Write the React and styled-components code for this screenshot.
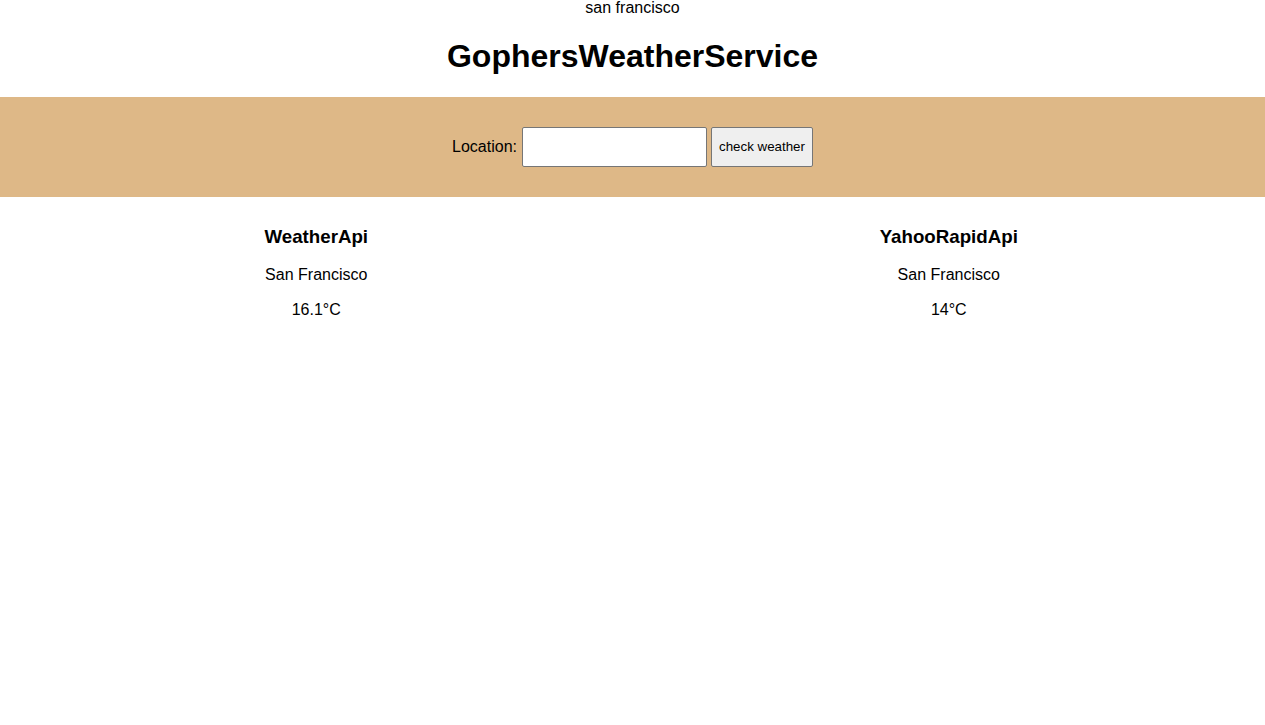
import React, { useState } from 'react';
import styled, { createGlobalStyle } from 'styled-components';

const GlobalStyle = createGlobalStyle`
    body {
        margin: 0;
        font-family: "Liberation Sans", Arial, sans-serif;
        color: #000;
        background: #fff;
    }
`;

const Page = styled.div`
    text-align: center;
`;

const Query = styled.div`
    font-size: 16px;
    line-height: 16px;
`;

const Title = styled.h1`
    margin: 22px 0 22px;
    font-size: 32px;
    line-height: 37px;
`;

const Band = styled.form`
    height: 100px;
    background: #deb887;
    display: flex;
    align-items: center;
    justify-content: center;
    gap: 4px;
`;

const Label = styled.label`
    font-size: 16px;
    margin-right: 1px;
`;

const Input = styled.input`
    box-sizing: border-box;
    width: 185px;
    height: 40px;
    border: 1px solid #767676;
    border-radius: 2px;
    font-family: inherit;
    font-size: 16px;
    padding: 0 4px;
`;

const Button = styled.button`
    box-sizing: border-box;
    width: 102px;
    height: 40px;
    border: 1px solid #767676;
    border-radius: 2px;
    background: #efefef;
    font-family: inherit;
    font-size: 13.33px;
    color: #000;
    padding: 0 0 2px;
`;

const Results = styled.div`
    display: grid;
    grid-template-columns: 1fr 1fr;
    padding-top: 11px;
`;

const Column = styled.div`
    display: flex;
    flex-direction: column;
    align-items: center;
`;

const Source = styled.h3`
    margin: 18px 0 0;
    font-size: 18.72px;
    line-height: 22px;
`;

const Line = styled.p`
    margin: 18px 0 0;
    font-size: 16px;
    line-height: 18px;

    & + & {
        margin-top: 17px;
    }
`;

const results = [
    { source: 'WeatherApi', city: 'San Francisco', temp: '16.1' },
    { source: 'YahooRapidApi', city: 'San Francisco', temp: '14' }
];

const App = () => {
    const [location, setLocation] = useState('');

    return (
        <Page>
            <GlobalStyle />
            <Query>san francisco</Query>
            <Title>GophersWeatherService</Title>
            <Band onSubmit={(e) => e.preventDefault()}>
                <Label htmlFor="location">Location:</Label>
                <Input
                    id="location"
                    value={location}
                    onChange={(e) => setLocation(e.target.value)}
                />
                <Button type="submit">check weather</Button>
            </Band>
            <Results>
                {results.map((r) => (
                    <Column key={r.source}>
                        <Source>{r.source}</Source>
                        <Line>{r.city}</Line>
                        <Line>{r.temp}°C</Line>
                    </Column>
                ))}
            </Results>
        </Page>
    );
};

export default App;
